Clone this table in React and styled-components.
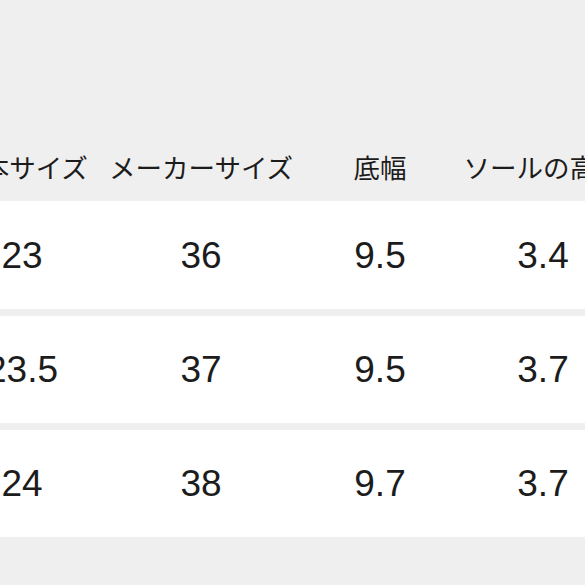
import React from "react";
import styled, { createGlobalStyle } from "styled-components";

const GlobalStyle = createGlobalStyle`
  html, body {
    margin: 0;
    padding: 0;
    background: #efefef;
  }
  body {
    font-family: "Liberation Sans", "Noto Sans CJK JP", sans-serif;
    color: #1c1c1c;
  }
`;

const columns = ["日本サイズ", "メーカーサイズ", "底幅", "ソールの高さ"];

const rows = [
  ["23", "36", "9.5", "3.4"],
  ["23.5", "37", "9.5", "3.7"],
  ["24", "38", "9.7", "3.7"],
];

function App() {
  return (
    <>
      <GlobalStyle />
      <Viewport>
        <SizeTable>
          <HeaderRow>
            {columns.map((c) => (
              <HeaderCell key={c}>{c}</HeaderCell>
            ))}
          </HeaderRow>
          {rows.map((r, i) => (
            <BodyRow key={i}>
              {r.map((v, j) => (
                <Cell key={j}>{v}</Cell>
              ))}
            </BodyRow>
          ))}
        </SizeTable>
      </Viewport>
    </>
  );
}

export default App;

const Viewport = styled.div`
  width: 585px;
  height: 585px;
  overflow: hidden;
  padding-top: 129px;
  box-sizing: border-box;
`;

const SizeTable = styled.div`
  margin-left: -68px;
  width: 684px;
  display: flex;
  flex-direction: column;
  gap: 7px;
`;

const gridCols = "180px 178px 180px 146px";

const HeaderRow = styled.div`
  display: grid;
  grid-template-columns: ${gridCols};
  height: 72px;
  background: #efefef;
  margin-bottom: -7px;
`;

const HeaderCell = styled.div`
  display: flex;
  align-items: center;
  justify-content: center;
  white-space: nowrap;
  font-family: "Noto Sans CJK JP", sans-serif;
  font-size: 26.5px;
  font-weight: 400;
  padding-top: 2px;
  min-width: 0;
`;

const BodyRow = styled.div`
  display: grid;
  grid-template-columns: ${gridCols};
  height: 107px;
  background: #ffffff;

  &:nth-child(2) {
    height: 108px;
  }
`;

const Cell = styled.div`
  display: flex;
  align-items: center;
  justify-content: center;
  white-space: nowrap;
  font-size: 37px;
  font-weight: 400;
  padding-top: 1px;
  min-width: 0;
`;
